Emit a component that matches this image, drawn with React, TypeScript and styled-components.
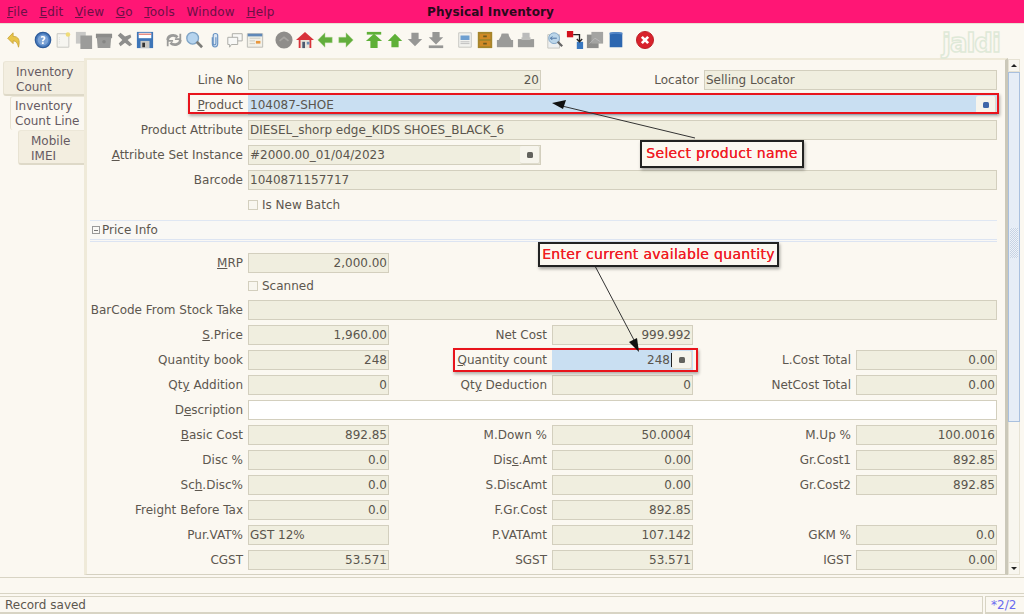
import React from 'react';
import styled, { createGlobalStyle } from 'styled-components';

const GlobalStyle = createGlobalStyle`
  html, body {
    margin: 0;
    padding: 0;
    background: #fbf8f1;
  }
`;

const Page = styled.div`
  position: relative;
  width: 1024px;
  height: 614px;
  overflow: hidden;
  display: flex;
  flex-direction: column;
  background: #fbf8f1;
  color: #5d574f;
  font-family: 'DejaVu Sans', sans-serif;
  font-size: 12px;
`;

const MenuBar = styled.div`
  position: relative;
  height: 23px;
  flex: none;
  background: #ff1675;
  border-bottom: 1px solid #e8e2d2;
  display: flex;
  align-items: center;
  padding-left: 7px;
  gap: 11.500px;
  color: #6d1046;
`;

const MenuItem = styled.span`
  letter-spacing: 0.2px;
`;

const Title = styled.div`
  position: absolute;
  left: 427px;
  top: 5px;
  font-weight: bold;
  font-size: 12px;
  letter-spacing: 0.1px;
  color: #2b0a1c;
`;

const Toolbar = styled.div`
  height: 34px;
  flex: none;
  box-sizing: border-box;
  padding: 0 0 3px 4px;
  display: flex;
  align-items: center;
  gap: 8.500px;
`;

const ToolGroup = styled.div`
  display: flex;
  align-items: center;
`;

const ToolButton = styled.div`
  width: 20.4px;
  height: 20px;
  display: flex;
  justify-content: center;
  align-items: center;
  filter: blur(0.3px);
`;

const Watermark = styled.div`
  position: absolute;
  left: 942px;
  top: 28px;
  font-weight: bold;
  font-size: 26px;
  letter-spacing: -1px;
  color: #fbf8f1;
  -webkit-text-stroke: 1.5px #dfe9d8;
`;

const Main = styled.div`
  flex: 1;
  min-height: 0;
  display: flex;
`;

const TabColumn = styled.div`
  width: 84px;
  flex: none;
  display: flex;
  flex-direction: column;
  align-items: flex-end;
  padding-top: 3px;
`;

const Tab = styled.div<{ $active?: boolean; $width: number; $height: number }>`
  width: ${(p) => p.$width}px;
  height: ${(p) => p.$height}px;
  box-sizing: border-box;
  padding: ${(p) => (p.$active ? 2 : 3)}px 0 0 ${(p) => (p.$active ? 4 : 12)}px;
  line-height: 15px;
  background: ${(p) => (p.$active ? '#fbf8f1' : '#f3eee0')};
  border-left: 1px solid #e8e3d3;
  border-top: 1px solid #ece7d8;
  border-bottom: ${(p) => (p.$active ? 'none' : '2px solid #ded9c8')};
  border-radius: 3px 0 0 3px;
  color: #665a62;
`;

const Panel = styled.div`
  flex: 1;
  min-width: 0;
  box-sizing: border-box;
  border-left: 3px solid #efead9;
  border-top: 2px solid #efead9;
  border-right: 3px solid #cbc8b9;
  border-bottom: 1px solid #d5d1c1;
  padding: 10px 7px 0 3px;
  display: flex;
  flex-direction: column;
  gap: 5px;
  overflow: hidden;
`;

const WideRow = styled.div`
  display: grid;
  grid-template-columns: 153px 293px 153px 293px;
  column-gap: 5px;
  flex: none;
`;

const TripleRow = styled.div<{ $short?: boolean }>`
  display: grid;
  grid-template-columns: 153px 141px 153px 141px 153px 141px;
  column-gap: 5px;
  flex: none;
  height: ${(p) => (p.$short ? 19 : 20)}px;
`;

const Label = styled.div`
  height: 20px;
  line-height: 20px;
  text-align: right;
  white-space: nowrap;
`;

const Field = styled.div<{ $right?: boolean; $span?: number; $tone?: 'blue' | 'white' }>`
  grid-column: span ${(p) => p.$span ?? 1};
  height: 20px;
  box-sizing: border-box;
  display: flex;
  align-items: center;
  justify-content: ${(p) => (p.$right ? 'flex-end' : 'flex-start')};
  padding: 0 1px;
  background: ${(p) =>
    p.$tone === 'blue' ? '#c9dff2' : p.$tone === 'white' ? '#ffffff' : '#f0eedf'};
  border: 1px solid ${(p) => (p.$tone === 'blue' ? '#c9dff2' : '#d3cfbe')};
  color: #5a554d;
  white-space: nowrap;
  overflow: hidden;
`;

const FieldText = styled.span`
  flex: 1;
`;

const FieldButton = styled.span`
  width: 20px;
  height: 18px;
  margin-right: -1px;
  flex: none;
  box-sizing: border-box;
  display: flex;
  align-items: center;
  justify-content: center;
  background: #f6f4ec;
  border-right: 1px solid #dedbcc;
  border-bottom: 1px solid #dedbcc;
  border-radius: 2px;
`;

const ButtonDot = styled.span<{ $blue?: boolean }>`
  width: 6px;
  height: 6px;
  border-radius: 1.5px;
  background: ${(p) => (p.$blue ? '#3f66a8' : '#62625e')};
`;

const Caret = styled.span`
  width: 1px;
  height: 14px;
  margin-left: 1px;
  background: #222;
`;

const CheckRow = styled.label<{ $short?: boolean }>`
  height: ${(p) => (p.$short ? 18 : 20)}px;
  box-sizing: border-box;
  padding-bottom: ${(p) => (p.$short ? 0 : 1)}px;
  margin-left: 158px;
  display: flex;
  align-items: center;
  gap: 4px;
  flex: none;
`;

const CheckBox = styled.span`
  width: 8px;
  height: 8px;
  border: 1px solid #d3cfbe;
  background: #f8f6ef;
`;

const Section = styled.div`
  height: 22px;
  flex: none;
  margin-bottom: 6px;
  box-sizing: border-box;
  display: flex;
  align-items: center;
  gap: 2px;
  background: #f9f8f5;
  border-top: 1px solid #dfe7f3;
  border-bottom: 3px double #dce4f2;
  width: 907px;
`;

const Collapse = styled.span`
  width: 6px;
  height: 6px;
  margin-left: 2px;
  border: 1px solid #999;
  position: relative;
  &::after {
    content: '';
    position: absolute;
    left: 1px;
    right: 1px;
    top: 2.5px;
    height: 1px;
    background: #777;
  }
`;

const Scrollbar = styled.div`
  width: 16px;
  flex: none;
  display: flex;
  flex-direction: column;
  padding: 1px 4px 0 0;
  box-sizing: border-box;
`;

const ScrollButton = styled.div`
  height: 11px;
  flex: none;
  background: #f8f6ef;
  border: 1px solid #e6e2d4;
  display: flex;
  align-items: center;
  justify-content: center;
`;

const Arrow = styled.span<{ $up?: boolean }>`
  width: 0;
  height: 0;
  border-left: 3px solid transparent;
  border-right: 3px solid transparent;
  ${(p) => (p.$up ? 'border-bottom: 3px solid #222;' : 'border-top: 3px solid #222;')}
`;

const ScrollThumb = styled.div`
  height: 350px;
  flex: none;
  box-sizing: border-box;
  background: #e6edf6;
  border: 1px solid #a9c0de;
  display: flex;
  align-items: flex-start;
  justify-content: center;
  padding-top: 155px;
`;

const ScrollGrip = styled.div`
  width: 8px;
  height: 30px;
  background: repeating-conic-gradient(#c6d3e4 0 25%, #eef2f8 0 50%) 0 0 / 2px 2px;
`;

const ScrollTrack = styled.div`
  flex: 1;
  background: #f8f6ef;
  border-left: 1px solid #e6e2d4;
  border-right: 1px solid #e6e2d4;
`;

const ActionRow = styled.div`
  height: 17px;
  flex: none;
  margin-top: 2px;
  border-top: 1px solid #d8d4c4;
  border-bottom: 1px solid #d8d4c4;
  box-sizing: border-box;
  background: #fbf8f1;
`;

const StatusRow = styled.div`
  height: 18px;
  flex: none;
  margin-top: 2px;
  display: flex;
  gap: 2px;
`;

const StatusBox = styled.div<{ $count?: boolean }>`
  box-sizing: border-box;
  height: 18px;
  line-height: 17px;
  border-top: 1px solid #d8d4c4;
  border-bottom: 2px solid #d8d4c4;
  ${(p) =>
    p.$count
      ? 'width: 39px; flex: none; border-left: 1px solid #d8d4c4; color: #6a6af0; padding-left: 5px;'
      : 'flex: 1; padding-left: 5px; border-right: 1px solid #d8d4c4;'}
`;

const Highlight = styled.div<{ $x: number; $y: number; $w: number; $h: number }>`
  position: absolute;
  left: ${(p) => p.$x}px;
  top: ${(p) => p.$y}px;
  width: ${(p) => p.$w}px;
  height: ${(p) => p.$h}px;
  box-sizing: border-box;
  border: 2px solid #e8141c;
  box-shadow: 1px 2px 3px rgba(0, 0, 0, 0.3);
`;

const Callout = styled.div<{ $x: number; $y: number; $w: number; $h: number }>`
  position: absolute;
  left: ${(p) => p.$x}px;
  top: ${(p) => p.$y}px;
  width: ${(p) => p.$w}px;
  height: ${(p) => p.$h}px;
  box-sizing: border-box;
  border: 2px solid #222;
  background: #fbf8f1;
  box-shadow: 1px 2px 3px rgba(0, 0, 0, 0.35);
  color: #f01c24;
  font-size: 14px;
  letter-spacing: 0.3px;
  line-height: ${(p) => p.$h - 5}px;
  text-align: center;
  white-space: nowrap;
  text-shadow: 0 0 0.6px #f01c24;
`;

const ArrowLayer = styled.svg`
  position: absolute;
  left: 0;
  top: 0;
  pointer-events: none;
`;

const icons: React.ReactNode[][] = [
  [
    <path key="a" d="M3 8l6-6v4c6 0 8 4 6 12-1-5-3-7-6-7v3z" fill="#e8c54a" stroke="#c9a53a" />,
  ],
  [
    <g key="a">
      <circle cx="10" cy="10" r="8.500" fill="#4d7fc0" stroke="#2f5d9c" strokeWidth="1.500" />
      <circle cx="10" cy="10" r="6" fill="#7ba3d6" />
      <text x="10" y="14" textAnchor="middle" fontSize="11" fontWeight="bold" fill="#fff" fontFamily="DejaVu Sans">?</text>
    </g>,
    <g key="b">
      <path d="M3.500 3h13v15h-13z" fill="#f6f5f0" stroke="#c4c4c0" />
      <circle cx="15.500" cy="4" r="2.500" fill="#f0dc78" />
      <path d="M6 7v7" stroke="#ddd" strokeDasharray="1 1" />
    </g>,
    <g key="c">
      <path d="M1 1h11v13H1z" fill="#c8c8c6" />
      <path d="M6 5h13v15H6z" fill="#9c9c9a" />
    </g>,
    <g key="d">
      <path d="M1 3h18v5H1z" fill="#8d8d8b" />
      <path d="M2 7h16l-1 12H3z" fill="#9a9a98" />
      <circle cx="10" cy="12" r="2" fill="#868684" />
    </g>,
    <path key="e" d="M2 5l3-3 5 4 6-2 1 3-4 3 5 5-3 2-5-4-5 4-2-3 4-4z" fill="#8e8e8c" />,
    <g key="f">
      <path d="M1 1h18v18H1z" fill="#3e76b8" />
      <path d="M3 2h14v6H3z" fill="#fff" />
      <path d="M3 3h14v1H3z" fill="#d84030" />
      <path d="M5 11h10v8H5z" fill="#c8c8c4" />
      <path d="M7 13h3v5H7z" fill="#333" />
    </g>,
  ],
  [
    <g key="a" fill="none" stroke="#9b9b99" strokeWidth="3">
      <path d="M3 10c0-5 7-7 11-3" />
      <path d="M17 10c0 5-7 7-11 3" />
      <path d="M17 3v6h-6M3 17v-6h6" strokeWidth="2" />
    </g>,
    <g key="b">
      <circle cx="8.500" cy="8" r="6.500" fill="#b6d4ee" stroke="#7fa4c6" strokeWidth="1.500" />
      <path d="M13 12l6 6" stroke="#7c7c78" strokeWidth="3" />
    </g>,
    <path key="c" d="M7 7v7c0 5 6 5 6 0V5c0-3-5-3-5 0v9c0 2 3 2 3 0V7" fill="#dce8f4" stroke="#6b95c4" strokeWidth="1.300" />,
    <g key="d" fill="#f8f8f6" stroke="#a6a6a2">
      <path d="M7 3h11v8H7z" />
      <path d="M2 7h11v8H6l-2 3v-3H2z" />
    </g>,
    <g key="e">
      <path d="M1.500 3h17v15h-17z" fill="#f2f0e8" stroke="#b8b8b2" />
      <path d="M2 3h16v3H2z" fill="#5f88b8" />
      <path d="M11 11h5v3h-5z" fill="#e8963c" />
      <path d="M4 8h12M4 11h6M4 14h6" stroke="#c8c8c0" />
    </g>,
  ],
  [
    <g key="a">
      <circle cx="10" cy="10" r="9.500" fill="#8f8d8a" />
      <path d="M5 11l5-4 5 4" stroke="#a8a6a2" strokeWidth="2" fill="none" />
    </g>,
    <g key="b">
      <path d="M10 1L0 10h3v9h14v-9h3z" fill="#d8323a" />
      <path d="M5 10h10v9H5z" fill="#e8e4da" />
      <path d="M7 12h3v7H7z" fill="#4b5a70" />
      <path d="M12 12h3v3h-3z" fill="#6d8fb4" />
    </g>,
    <path key="c" d="M2 10l8-8v5h8v6h-8v5z" fill="#62ae3c" stroke="#a6cf88" strokeWidth="0.500" />,
    <path key="d" d="M18 10l-8-8v5H2v6h8v5z" fill="#62ae3c" stroke="#a6cf88" strokeWidth="0.500" />,
  ],
  [
    <g key="a" fill="#5fb038">
      <path d="M2 1h16v3H2z" />
      <path d="M10 3l9 8h-5v8H6v-8H1z" />
    </g>,
    <path key="b" d="M10 3l8 8h-4v7H6v-7H2z" fill="#5fb038" />,
    <path key="c" d="M6 2h8v7h4l-8 8-8-8h4z" fill="#979795" />,
    <g key="d" fill="#979795">
      <path d="M6 1h8v6h4l-8 8-8-8h4z" />
      <path d="M2 16h16v3H2z" />
    </g>,
  ],
  [
    <g key="a">
      <path d="M3 2h14v16H3z" fill="#f2f2ee" stroke="#c4c4c0" />
      <path d="M5 5h10v5H5z" fill="#6f9fd0" />
      <path d="M5 12h10M5 14h10" stroke="#bbb" />
    </g>,
    <g key="b">
      <path d="M2 1h16v18H2z" fill="#a5852c" />
      <path d="M4 3h12v6H4zM4 11h12v6H4z" fill="#d08a28" />
      <path d="M8 5h4v2H8zM8 13h4v2H8z" fill="#6d5a20" />
    </g>,
    <g key="c" fill="#9b9b99">
      <path d="M6 3h8v6H6z" />
      <path d="M1 10h18v8H1z" />
      <path d="M3 10l4-7h6l4 7z" />
    </g>,
    <g key="d" fill="#9b9b99">
      <path d="M6 2h8v6H6z" fill="#bbb" />
      <path d="M1 9h18v9H1z" />
      <path d="M5 7h10v3H5z" fill="#bdbdbb" />
    </g>,
  ],
  [
    <g key="a">
      <path d="M2 4h13v15H2z" fill="#eef0f0" stroke="#c4c4c0" />
      <circle cx="9" cy="8" r="6" fill="#bcd6ea" stroke="#7fa4c6" />
      <path d="M5 8h7M5 8l2-2M5 8l2 2" stroke="#41689a" fill="none" />
      <path d="M13 12l5 5" stroke="#666" strokeWidth="2.500" />
    </g>,
    <g key="b">
      <path d="M1 0h7v7H1z" fill="#d3101c" />
      <path d="M12 12h7v8h-7z" fill="#3a78c0" />
      <path d="M8 4h7v7M12 9l3 3 3-3" stroke="#222" strokeWidth="1.500" fill="none" />
    </g>,
    <g key="c">
      <path d="M1 4h13v15H1z" fill="#8e8e8c" />
      <path d="M6 1h13v13H6z" fill="#a4a4a2" />
      <path d="M4 14l6-6 6 4" stroke="#bbb" fill="none" />
    </g>,
    <g key="d">
      <path d="M3 2q7-2 14 0v16H3z" fill="#2d67b0" />
      <path d="M3 2q7-2 14 0v2q-7-2-14 0z" fill="#5688c8" />
    </g>,
  ],
  [
    <g key="a">
      <circle cx="10" cy="10" r="9.500" fill="#d8222c" stroke="#b81820" />
      <path d="M6.500 6.500l7 7M13.500 6.500l-7 7" stroke="#fff" strokeWidth="3" />
    </g>,
  ],
];

const menus = [
  ['F', 'ile'],
  ['E', 'dit'],
  ['V', 'iew'],
  ['G', 'o'],
  ['T', 'ools'],
  ['', 'Window'],
  ['H', 'elp'],
];

type Cell = { label: React.ReactNode; value?: string; left?: boolean };

const u = (before: string, mark: string, after: string) => (
  <>
    {before}
    <u>{mark}</u>
    {after}
  </>
);

const lowerRows: Cell[][] = [
  [
    { label: u('', 'B', 'asic Cost'), value: '892.85' },
    { label: 'M.Down %', value: '50.0004' },
    { label: 'M.Up %', value: '100.0016' },
  ],
  [
    { label: 'Disc %', value: '0.0' },
    { label: u('Dis', 'c', '.Amt'), value: '0.00' },
    { label: 'Gr.Cost1', value: '892.85' },
  ],
  [
    { label: u('Sc', 'h', '.Disc%'), value: '0.0' },
    { label: 'S.DiscAmt', value: '0.00' },
    { label: 'Gr.Cost2', value: '892.85' },
  ],
  [
    { label: 'Freight Before Tax', value: '0.0' },
    { label: 'F.Gr.Cost', value: '892.85' },
  ],
  [
    { label: 'Pur.VAT%', value: 'GST 12%', left: true },
    { label: 'P.VATAmt', value: '107.142' },
    { label: 'GKM %', value: '0.0' },
  ],
  [
    { label: 'CGST', value: '53.571' },
    { label: 'SGST', value: '53.571' },
    { label: 'IGST', value: '0.00' },
  ],
];

const renderCells = (cells: Cell[]) =>
  cells.map((c, i) => (
    <React.Fragment key={i}>
      <Label>{c.label}</Label>
      <Field $right={!c.left}>{c.value}</Field>
    </React.Fragment>
  ));

const App: React.FC = () => {
  return (
    <Page>
      <GlobalStyle />
      <MenuBar>
        {menus.map(([mark, rest]) => (
          <MenuItem key={rest}>
            <u>{mark}</u>
            {rest}
          </MenuItem>
        ))}
        <Title>Physical Inventory</Title>
      </MenuBar>

      <Toolbar>
        {icons.map((group, g) => (
          <ToolGroup key={g}>
            {group.map((icon, i) => (
              <ToolButton key={i}>
                <svg width="18" height="18" viewBox="0 0 20 20">
                  {icon}
                </svg>
              </ToolButton>
            ))}
          </ToolGroup>
        ))}
      </Toolbar>
      <Watermark>jaldi</Watermark>

      <Main>
        <TabColumn>
          <Tab $width={81} $height={35}>
            Inventory
            <br />
            Count
          </Tab>
          <Tab $width={74} $height={34} $active>
            Inventory
            <br />
            Count Line
          </Tab>
          <Tab $width={66} $height={35}>
            Mobile
            <br />
            IMEI
          </Tab>
        </TabColumn>

        <Panel>
          <WideRow>
            <Label>Line No</Label>
            <Field $right>20</Field>
            <Label>Locator</Label>
            <Field>Selling Locator</Field>
          </WideRow>
          <WideRow>
            <Label>{u('', 'P', 'roduct')}</Label>
            <Field $span={3} $tone="blue">
              <FieldText>104087-SHOE</FieldText>
              <FieldButton>
                <ButtonDot $blue />
              </FieldButton>
            </Field>
          </WideRow>
          <WideRow>
            <Label>Product Attribute</Label>
            <Field $span={3}>DIESEL_shorp edge_KIDS SHOES_BLACK_6</Field>
          </WideRow>
          <WideRow>
            <Label>{u('', 'A', 'ttribute Set Instance')}</Label>
            <Field>
              <FieldText>#2000.00_01/04/2023</FieldText>
              <FieldButton>
                <ButtonDot />
              </FieldButton>
            </Field>
          </WideRow>
          <WideRow>
            <Label>Barcode</Label>
            <Field $span={3}>1040871157717</Field>
          </WideRow>
          <CheckRow>
            <CheckBox />
            Is New Batch
          </CheckRow>
          <Section>
            <Collapse />
            Price Info
          </Section>
          <TripleRow $short>
            <Label>{u('', 'M', 'RP')}</Label>
            <Field $right>2,000.00</Field>
          </TripleRow>
          <CheckRow $short>
            <CheckBox />
            Scanned
          </CheckRow>
          <WideRow>
            <Label>BarCode From Stock Take</Label>
            <Field $span={3}>{''}</Field>
          </WideRow>
          <TripleRow>
            <Label>{u('', 'S', '.Price')}</Label>
            <Field $right>1,960.00</Field>
            <Label>Net Cost</Label>
            <Field $right>999.992</Field>
          </TripleRow>
          <TripleRow>
            <Label>Quantity book</Label>
            <Field $right>248</Field>
            <Label>{u('', 'Q', 'uantity count')}</Label>
            <Field $right $tone="blue">
              248
              <Caret />
              <FieldButton>
                <ButtonDot />
              </FieldButton>
            </Field>
            <Label>L.Cost Total</Label>
            <Field $right>0.00</Field>
          </TripleRow>
          <TripleRow>
            <Label>{u('Qt', 'y', ' Addition')}</Label>
            <Field $right>0</Field>
            <Label>{u('Qt', 'y', ' Deduction')}</Label>
            <Field $right>0</Field>
            <Label>NetCost Total</Label>
            <Field $right>0.00</Field>
          </TripleRow>
          <WideRow>
            <Label>{u('D', 'e', 'scription')}</Label>
            <Field $span={3} $tone="white">
              {''}
            </Field>
          </WideRow>
          {lowerRows.map((cells, i) => (
            <TripleRow key={i}>{renderCells(cells)}</TripleRow>
          ))}
        </Panel>

        <Scrollbar>
          <ScrollButton>
            <Arrow $up />
          </ScrollButton>
          <ScrollThumb>
            <ScrollGrip />
          </ScrollThumb>
          <ScrollTrack />
          <ScrollButton>
            <Arrow />
          </ScrollButton>
        </Scrollbar>
      </Main>

      <ActionRow />
      <StatusRow>
        <StatusBox>Record saved</StatusBox>
        <StatusBox $count>*2/2</StatusBox>
      </StatusRow>

      <Highlight $x={188} $y={93} $w={811} $h={21} />
      <Highlight $x={453} $y={348} $w={245} $h={24} />
      <ArrowLayer width="1024" height="614" viewBox="0 0 1024 614">
        <path d="M695 138L562 106" stroke="#333" strokeWidth="1" fill="none" />
        <path d="M552 103l14-3-3 9z" fill="#111" />
        <path d="M595 266L634 340" stroke="#333" strokeWidth="1" fill="none" />
        <path d="M639 352l-10-10 8-4z" fill="#111" />
      </ArrowLayer>
      <Callout $x={640} $y={140} $w={164} $h={28}>
        Select product name
      </Callout>
      <Callout $x={538} $y={242} $w={241} $h={25}>
        Enter current available quantity
      </Callout>
    </Page>
  );
};

export default App;
